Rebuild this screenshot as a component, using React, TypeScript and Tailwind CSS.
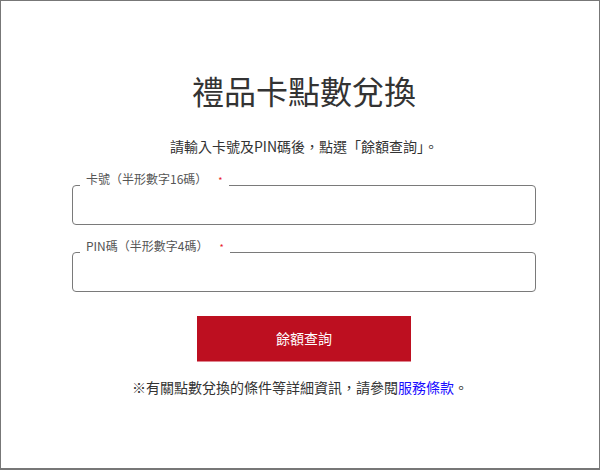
const fontStack = "font-['Noto_Sans_CJK_TC','Noto_Sans',sans-serif]";

function Field({ label }: { label: string }) {
  return (
    <fieldset className="rounded-[4px] border border-[#7a7a7a] px-0 pb-0">
      <legend className="ml-[7px] px-[6px] pb-[10px] text-[12px] leading-[12px] text-[#555]">
        {label}
        <span className="ml-[11px] text-[9px] text-[#e8202a]">*</span>
      </legend>
      <input type="text" className="block h-[27px] w-full bg-transparent px-3 text-[14px] outline-none" />
    </fieldset>
  );
}

export default function App() {
  return (
    <div className={`h-[470px] w-[600px] border border-b-2 border-[#777] bg-white text-[#333] ${fontStack}`}>
      <div className="ml-[71px] flex w-[464px] flex-col">
        <h1 className="mt-[65px] text-center text-[32px] leading-[48px] font-normal text-[#333]">禮品卡點數兌換</h1>
        <p className="mt-[22px] text-center text-[14px] leading-[20px]">
          請輸入卡號及PIN碼後，點選「餘額查詢」。
        </p>
        <form className="mt-[17px] flex flex-col gap-[15px]">
          <Field label="卡號（半形數字16碼）" />
          <Field label="PIN碼（半形數字4碼）" />
        </form>
        <button
          type="button"
          className="mx-auto mt-[24px] h-[46px] w-[214px] border-b border-[#e08590] bg-[#bd0f20] text-[14px] text-white"
        >
          餘額查詢
        </button>
        <p className="mt-[15px] -ml-[8px] text-center text-[14px] leading-[20px]">
          ※有關點數兌換的條件等詳細資訊，請參閱<a href="#" className="text-[#1a0dff]">服務條款</a>。
        </p>
      </div>
    </div>
  );
}
